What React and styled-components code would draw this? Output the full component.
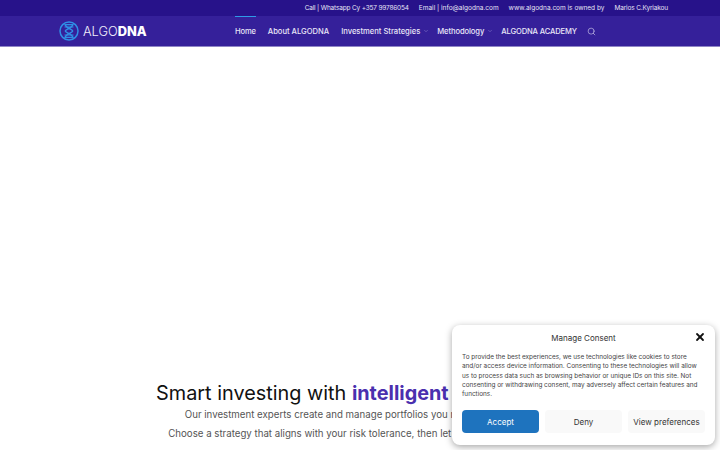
import React from "react";
import styled, { createGlobalStyle } from "styled-components";
import { Search, ChevronDown, X } from "lucide-react";

const GlobalStyle = createGlobalStyle`
  html, body {
    margin: 0;
    padding: 0;
    height: 450px;
    overflow: hidden;
    background: #fff;
    font-family: "Inter", "Liberation Sans", sans-serif;
  }
`;

const navItems = [
  { label: "Home", active: true, spacing: -0.2 },
  { label: "About ALGODNA" },
  { label: "Investment Strategies", caret: true },
  { label: "Methodology", caret: true, spacing: -0.1 },
  { label: "ALGODNA ACADEMY", spacing: -0.13 },
];

const topItems = [
  { label: "Call | Whatsapp Cy +357 99786054", spacing: -0.18 },
  { label: "Email | info@algodna.com", spacing: 0 },
  { label: "www.algodna.com is owned by", spacing: 0 },
  { label: "Marios C.Kyriakou", spacing: -0.15 },
];

function Logo() {
  return (
    <LogoWrap>
      <svg width="20" height="20" viewBox="0 0 20 20" fill="none" stroke="#2f8fe6" strokeWidth="1.5">
        <circle cx="10" cy="10" r="9" />
        <path d="M5.5 3.6h9M5.5 16.4h9M5.5 6h9M5.5 14h9" strokeWidth="1.1" />
        <path d="M6.3 3.6c0 3.6 7.4 4.6 7.4 6.4s-7.4 2.8-7.4 6.4M13.7 3.6c0 3.6-7.4 4.6-7.4 6.4s7.4 2.8 7.4 6.4" />
      </svg>
      <LogoText>
        ALGO<b>DNA</b>
      </LogoText>
    </LogoWrap>
  );
}

export default function App() {
  return (
    <Page>
      <GlobalStyle />
      <TopBar>
        {topItems.map((t) => (
          <TopItem key={t.label} $spacing={t.spacing}>
            {t.label}
          </TopItem>
        ))}
      </TopBar>
      <NavBar>
        <Logo />
        <Menu>
          {navItems.map((item) => (
            <MenuItem key={item.label} $active={item.active} $caret={item.caret} $spacing={item.spacing}>
              {item.label}
              {item.caret && <ChevronDown size={6} color="#8f84d0" />}
            </MenuItem>
          ))}
          <SearchButton>
            <Search size={9} color="#d8d4f0" strokeWidth={1.6} />
          </SearchButton>
        </Menu>
      </NavBar>
      <Hero />
      <Intro>
        <Heading>
          Smart investing with <strong>intelligent</strong> algorithms
        </Heading>
        <Lead>Our investment experts create and manage portfolios you may follow with us</Lead>
        <Lead>Choose a strategy that aligns with your risk tolerance, then let us do the rest for you</Lead>
      </Intro>
      <Consent>
        <ConsentHeader>
          <ConsentTitle>Manage Consent</ConsentTitle>
          <CloseButton>
            <X size={12} color="#111" strokeWidth={3.6} />
          </CloseButton>
        </ConsentHeader>
        <ConsentText>
          To provide the best experiences, we use technologies like cookies to store
          and/or access device information. Consenting to these technologies will allow
          us to process data such as browsing behavior or unique IDs on this site. Not
          consenting or withdrawing consent, may adversely affect certain features and
          functions.
        </ConsentText>
        <ConsentActions>
          <ConsentButton $primary>Accept</ConsentButton>
          <ConsentButton>Deny</ConsentButton>
          <ConsentButton>View preferences</ConsentButton>
        </ConsentActions>
      </Consent>
    </Page>
  );
}

const Page = styled.div`
  position: relative;
  width: 720px;
  height: 450px;
  overflow: hidden;
`;
const TopBar = styled.div`
  height: 16px;
  display: flex;
  align-items: center;
  justify-content: flex-end;
  gap: 10px;
  padding-right: 52px;
  background: #27128a;
`;
const TopItem = styled.span`
  font-size: 6.5px;
  color: #e6e3f5;
  white-space: nowrap;
  letter-spacing: ${(p) => p.$spacing}px;
`;
const NavBar = styled.div`
  display: flex;
  align-items: stretch;
  justify-content: space-between;
  padding: 0 124px 0 59px;
  background: #35209a;
  border-bottom: 1px solid #8f86c6;
  box-sizing: border-box;
  height: 31px;
`;
const LogoWrap = styled.div`
  display: flex;
  align-items: center;
  gap: 4px;
`;
const LogoText = styled.span`
  font-size: 12.8px;
  font-weight: 300;
  color: #f0eefa;
  b {
    font-weight: 800;
    color: #fff;
  }
`;
const Menu = styled.div`
  display: flex;
  align-items: center;
  gap: 12px;
`;
const MenuItem = styled.div`
  position: relative;
  height: 100%;
  display: flex;
  align-items: center;
  gap: 3px;
  margin-right: ${(p) => (p.$caret ? "-4px" : "0")};
  font-size: 7.6px;
  font-weight: 500;
  letter-spacing: ${(p) => p.$spacing || 0}px;
  color: #e9e6f7;
  white-space: nowrap;
  &::before {
    content: "";
    display: ${(p) => (p.$active ? "block" : "none")};
    position: absolute;
    top: 0;
    left: 0;
    right: 0;
    height: 1px;
    background: #2f9be8;
  }
`;
const SearchButton = styled.div`
  display: flex;
  align-items: center;
  margin-left: -2px;
`;
const Hero = styled.div`
  height: 334px;
`;
const Intro = styled.div`
  text-align: center;
`;
const Heading = styled.h1`
  margin: 0 0 4px;
  padding-right: 11px;
  height: 24px;
  line-height: 24px;
  font-size: 19.85px;
  font-weight: 400;
  color: #111;
  white-space: nowrap;
  strong {
    font-weight: 700;
    color: #4a2fae;
  }
`;
const Lead = styled.p`
  margin: 0 0 7px;
  line-height: 12px;
  font-size: 9.7px;
  color: #555;
  white-space: nowrap;
`;
const Consent = styled.div`
  position: absolute;
  left: 452px;
  top: 325px;
  width: 263px;
  height: 120px;
  box-sizing: border-box;
  padding: 0 10px;
  background: #fff;
  border-radius: 8px;
  box-shadow: 0 2px 7px rgba(0, 0, 0, 0.35);
`;
const ConsentHeader = styled.div`
  position: relative;
  height: 25px;
  display: flex;
  align-items: center;
  justify-content: center;
`;
const ConsentTitle = styled.div`
  font-size: 8px;
  color: #333;
`;
const CloseButton = styled.div`
  position: absolute;
  right: -1px;
  top: 6px;
  display: flex;
`;
const ConsentText = styled.div`
  margin-top: 3px;
  height: 47px;
  font-size: 6.4px;
  line-height: 9.25px;
  color: #444;
`;
const ConsentActions = styled.div`
  display: grid;
  grid-template-columns: 77px 77px 77px;
  gap: 6px;
  margin-top: 10px;
`;
const ConsentButton = styled.div`
  height: 23px;
  display: flex;
  align-items: center;
  justify-content: center;
  border-radius: 4px;
  font-size: 8px;
  white-space: nowrap;
  background: ${(p) => (p.$primary ? "#1e73be" : "#f9f9f9")};
  color: ${(p) => (p.$primary ? "#fff" : "#333")};
`;
